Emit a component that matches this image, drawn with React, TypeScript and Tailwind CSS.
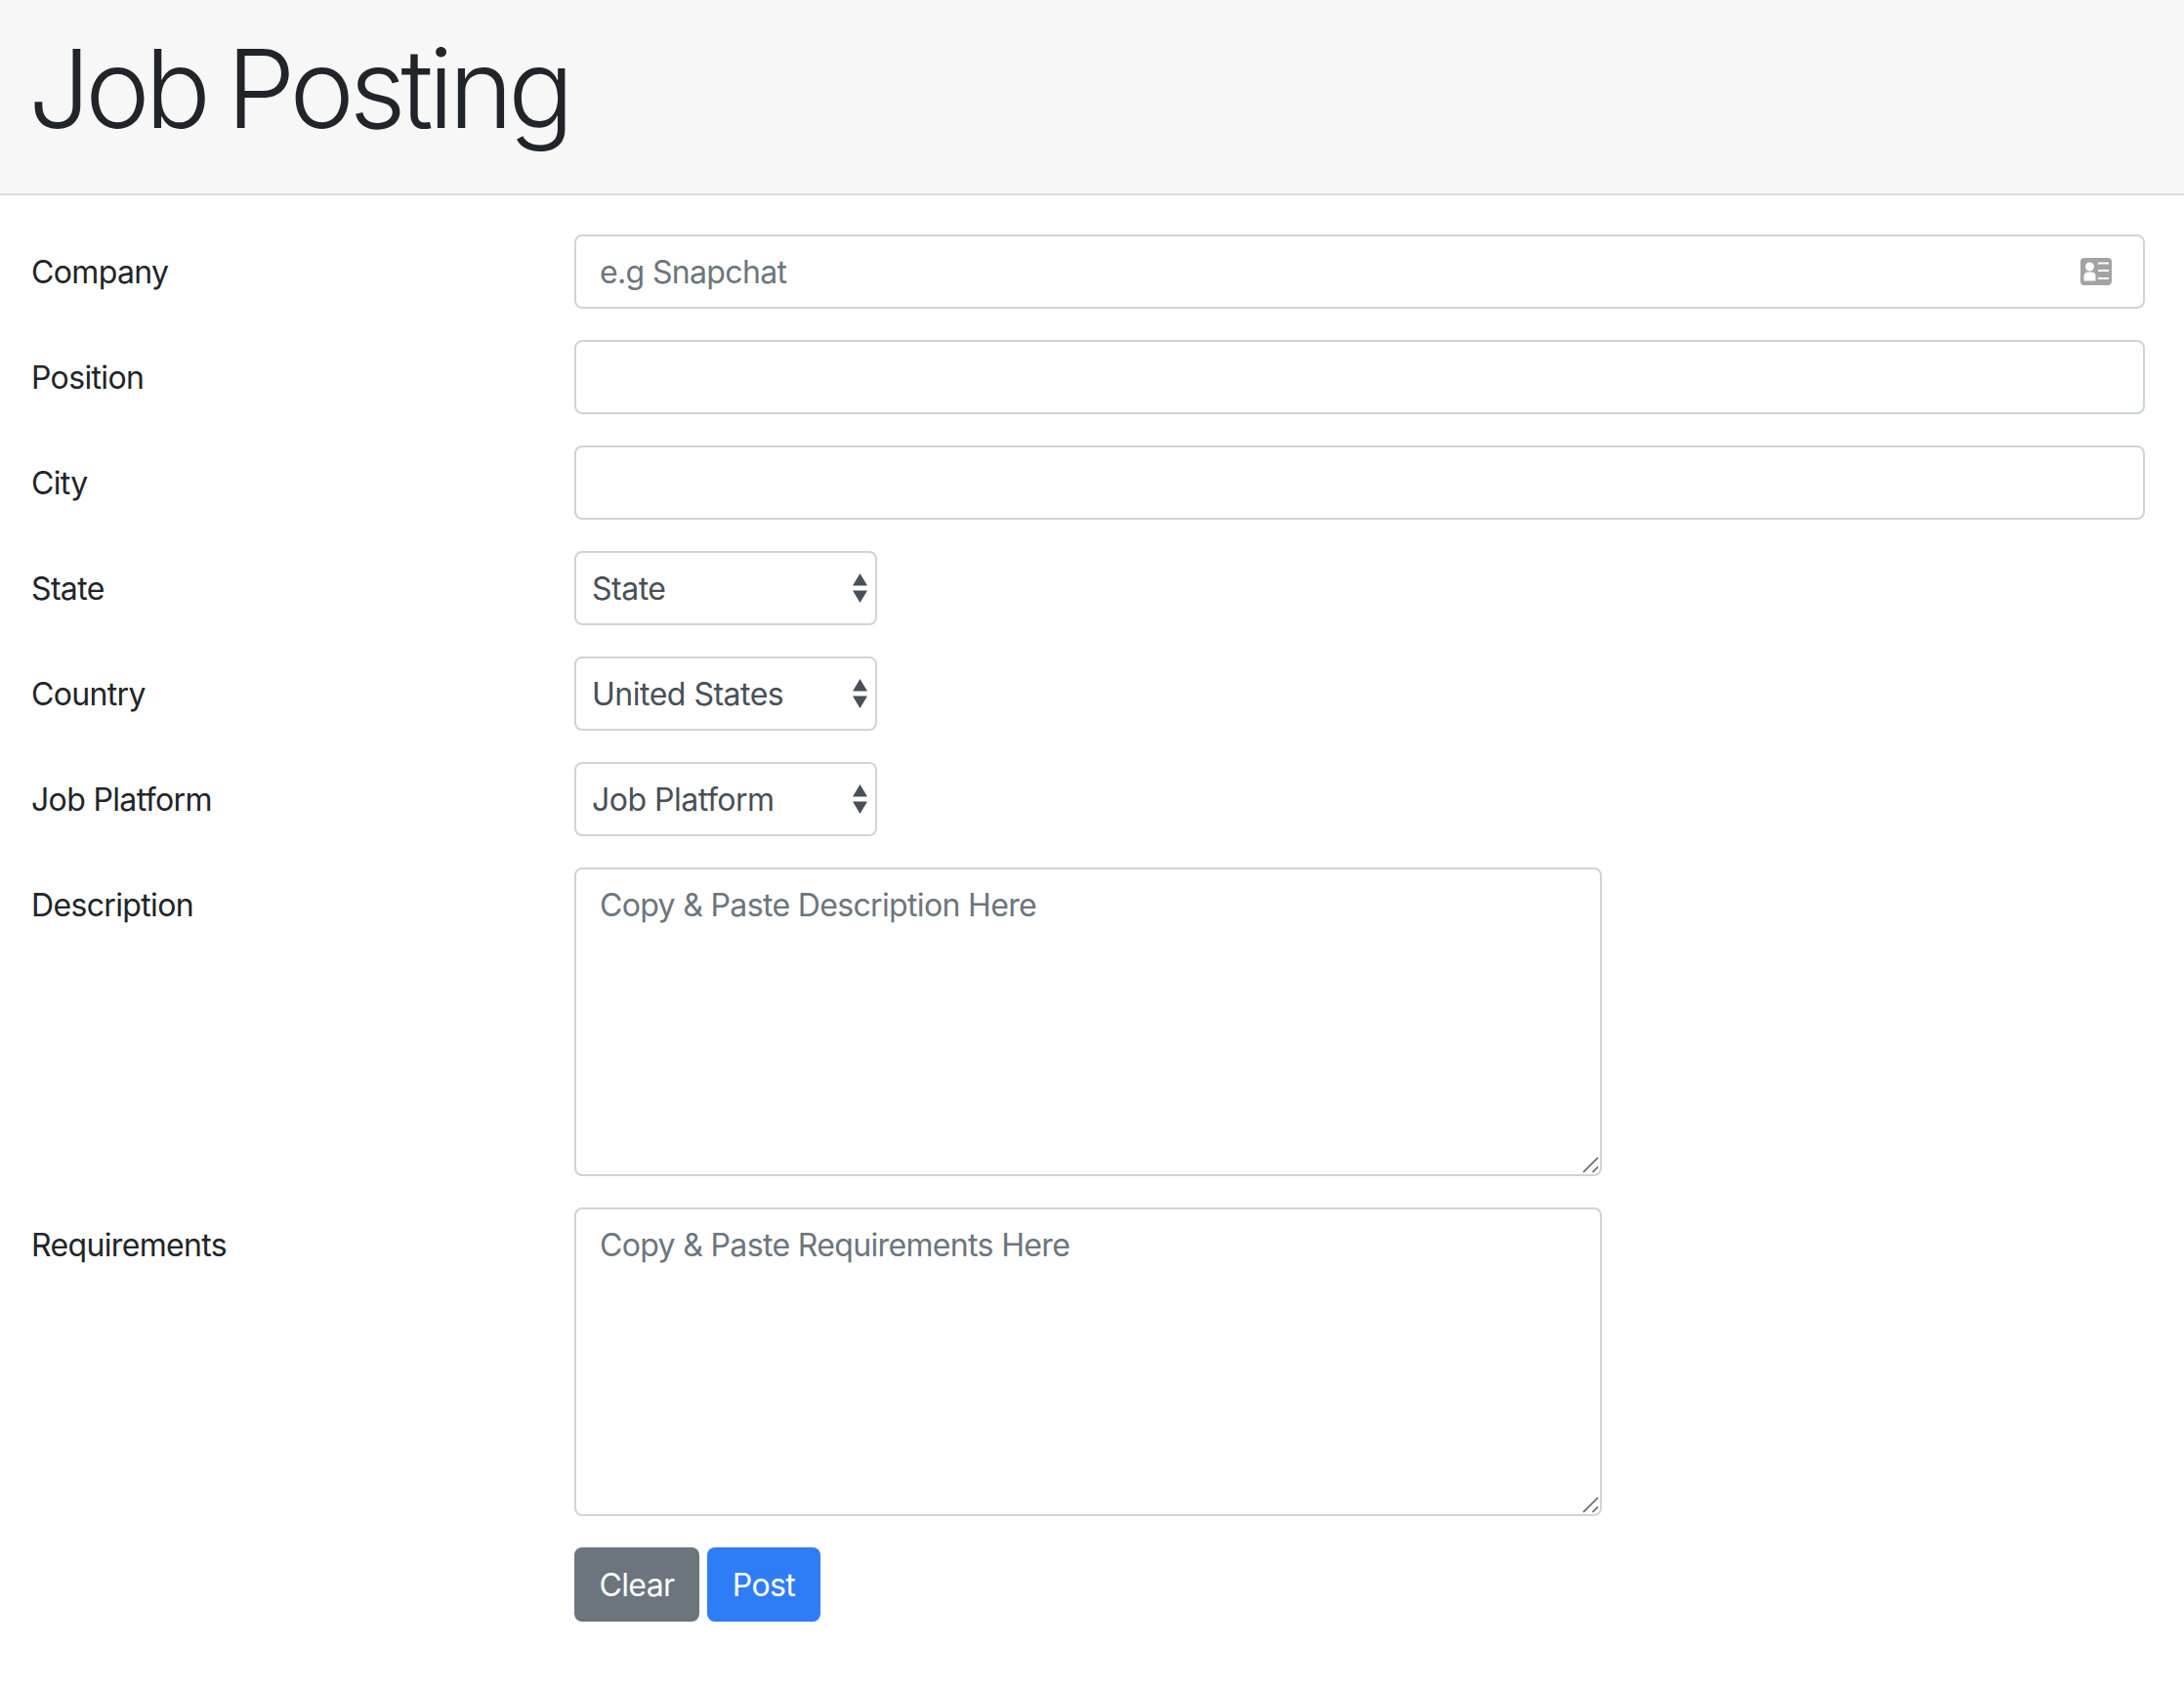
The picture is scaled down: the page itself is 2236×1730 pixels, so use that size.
import React from "react";

const font = "font-['Inter','Liberation_Sans',sans-serif]";

function Row({ label, children }: { label: string; children: React.ReactNode }) {
  return (
    <div className="flex items-start">
      <label className="w-[556px] shrink-0 pt-[15px] text-[32px] leading-[48px] text-[#212529] tracking-[-0.65px]">{label}</label>
      <div className="flex-1 min-w-0">{children}</div>
    </div>
  );
}

const inputCls =
  "block w-full h-[76px] rounded-[8px] border-2 border-[#ced4da] bg-white px-[24px] text-[32px] text-[#495057] tracking-[-0.65px] placeholder:text-[#6c757d] outline-none";

function Sel({ value }: { value: string }) {
  return (
    <div className="relative w-[310px]">
      <select
        defaultValue={value}
        className="block w-full h-[76px] appearance-none rounded-[8px] border-2 border-[#ced4da] bg-white pl-[16px] pr-[40px] pt-[2px] text-[32px] text-[#495057] tracking-[-0.5px] outline-none"
      >
        <option>{value}</option>
      </select>
      <svg className="absolute right-[10px] top-[23px] pointer-events-none" width="15" height="30" viewBox="0 0 15 30">
        <path d="M7.5 0 L15 12.5 H0 Z M0 17.5 H15 L7.5 30 Z" fill="#495057" />
      </svg>
    </div>
  );
}

function Area({ placeholder }: { placeholder: string }) {
  return (
    <div className="relative w-[1052px]">
      <textarea
        placeholder={placeholder}
        className="block w-full h-[316px] resize-none rounded-[8px] border-2 border-[#ced4da] bg-white px-[24px] pt-[13px] pb-[11px] text-[32px] leading-[48px] text-[#495057] tracking-[-0.65px] placeholder:text-[#6c757d] outline-none"
      />
      <svg className="absolute right-[3px] bottom-[3px] pointer-events-none" width="17" height="17" viewBox="0 0 17 17">
        <path d="M1 16 L16 1 M10.5 16 L16 10.5" stroke="#5f5f5f" strokeWidth="1.6" fill="none" />
      </svg>
    </div>
  );
}

export default function App() {
  return (
    <div className={`${font} min-h-[1730px] bg-white`}>
      <header className="h-[200px] bg-[#f7f7f7] border-b-2 border-[#dcdcdc] pl-[29px] pr-[32px] flex items-start">
        <h1 className="pt-[24px] text-[112px] leading-[132px] font-light text-[#212529] tracking-[-5.2px] [word-spacing:-5px]">Job Posting</h1>
      </header>
      <main className="pl-[32px] pr-[40px] pt-[40px] flex flex-col gap-[32px]">
        <Row label="Company">
          <div className="relative">
            <input className={inputCls} placeholder="e.g Snapchat" />
            <svg className="absolute right-[34px] top-[24px]" width="32" height="28" viewBox="0 0 32 28">
              <rect width="32" height="28" rx="4" fill="#a3a3a3" />
              <circle cx="9.5" cy="9" r="4.5" fill="#fff" />
              <path d="M3.5 23.5 V19 Q3.5 14.5 8 14.5 H11 Q15.5 14.5 15.5 19 V23.5 Z" fill="#fff" />
              <path d="M18 5.5 H29 M18 13 H29 M18 21 H29" stroke="#fff" strokeWidth="2.2" />
            </svg>
          </div>
        </Row>
        <Row label="Position"><input className={inputCls} /></Row>
        <Row label="City"><input className={inputCls} /></Row>
        <Row label="State"><Sel value="State" /></Row>
        <Row label="Country"><Sel value="United States" /></Row>
        <Row label="Job Platform"><Sel value="Job Platform" /></Row>
        <Row label="Description"><Area placeholder="Copy & Paste Description Here" /></Row>
        <Row label="Requirements"><Area placeholder="Copy & Paste Requirements Here" /></Row>
        <div className="pl-[556px] flex gap-[8px]">
          <button className="h-[76px] w-[128px] pt-[2px] rounded-[8px] bg-[#6c757d] text-white text-[32px] tracking-[-0.6px]">Clear</button>
          <button className="h-[76px] w-[116px] pt-[2px] rounded-[8px] bg-[#2f7df6] text-white text-[32px] tracking-[-0.6px]">Post</button>
        </div>
      </main>
    </div>
  );
}
